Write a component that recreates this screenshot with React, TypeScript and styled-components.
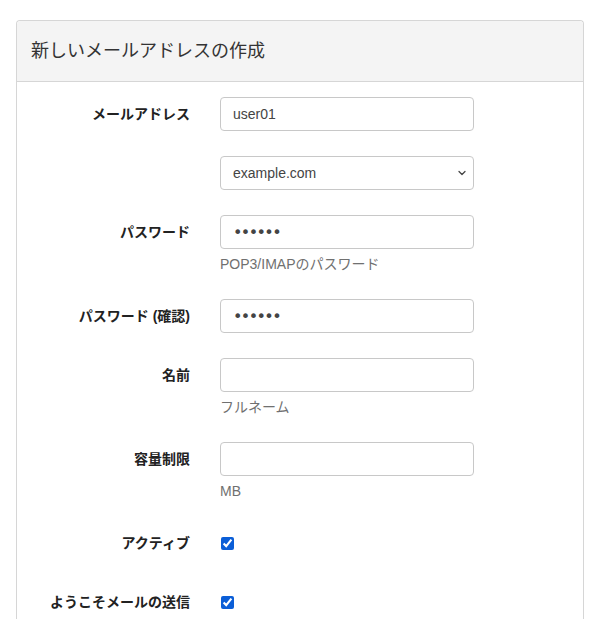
import * as React from 'react'
import styled, { createGlobalStyle } from 'styled-components'
import { ChevronDown } from 'lucide-react'

const GlobalStyle = createGlobalStyle`
  body {
    margin: 0;
    background: #fff;
    font-family: "Liberation Sans", "Noto Sans CJK JP", sans-serif;
    font-size: 14px;
    color: #333;
  }
`

const Page = styled.div`
  padding: 20px 28px 0 16px;
`

const Panel = styled.div`
  border: 1px solid #d6d6d6;
  border-bottom: none;
  border-radius: 4px 4px 0 0;
  background: #fff;
`

const PanelHeading = styled.div`
  background: #f4f4f4;
  border-bottom: 1px solid #d6d6d6;
  border-radius: 4px 4px 0 0;
  padding: 19px 14px 19px;
  font-size: 18px;
  line-height: 22px;
  color: #333;
`

const PanelBody = styled.div`
  padding: 15px 0 0;
  display: flex;
  flex-direction: column;
  gap: 25px;
`

const Row = styled.div`
  display: grid;
  grid-template-columns: 173px 254px;
  column-gap: 30px;
  align-items: start;
`

const Label = styled.label`
  text-align: right;
  font-weight: bold;
  font-size: 14px;
  line-height: 34px;
  height: 34px;
  white-space: nowrap;
  color: #222;
`

const Field = styled.div`
  display: flex;
  flex-direction: column;
  position: relative;
`

const Input = styled.input<{ $secret?: boolean }>`
  box-sizing: border-box;
  width: 254px;
  height: 34px;
  padding: 0 12px;
  border: 1px solid #c8c8c8;
  border-radius: 4px;
  font-family: ${(p) => (p.$secret ? '"DejaVu Sans", sans-serif' : 'inherit')};
  font-size: ${(p) => (p.$secret ? '16px' : '14px')};
  letter-spacing: ${(p) => (p.$secret ? '-1.6px' : 'normal')};
  color: #444;
  outline: none;
  background: #fff;
`

const Select = styled.select`
  box-sizing: border-box;
  width: 254px;
  height: 34px;
  padding: 6px 12px;
  border: 1px solid #c8c8c8;
  border-radius: 4px;
  font-family: inherit;
  font-size: 14px;
  color: #444;
  background: #fff;
  appearance: none;
  outline: none;
`

const Chevron = styled.span`
  position: absolute;
  right: 6px;
  top: 11px;
  display: flex;
  color: #444;
  pointer-events: none;
`

const Help = styled.div`
  margin-top: 5px;
  line-height: 20px;
  font-size: 14px;
  color: #707070;
`

const CheckCell = styled.div`
  height: 34px;
  display: flex;
  align-items: center;
`

const Check = styled.input`
  width: 13px;
  height: 13px;
  margin: 0 0 0 1px;
  accent-color: #0b5ed7;
`

const App: React.FC = () => {
  return (
    <Page>
      <GlobalStyle />
      <Panel>
        <PanelHeading>新しいメールアドレスの作成</PanelHeading>
        <PanelBody>
          <Row>
            <Label>メールアドレス</Label>
            <Field>
              <Input type="text" defaultValue="user01" />
            </Field>
          </Row>
          <Row>
            <Label />
            <Field>
              <Select defaultValue="example.com">
                <option value="example.com">example.com</option>
              </Select>
              <Chevron>
                <ChevronDown size={12} strokeWidth={2.5} />
              </Chevron>
            </Field>
          </Row>
          <Row>
            <Label>パスワード</Label>
            <Field>
              <Input $secret type="password" defaultValue="123456" />
              <Help>POP3/IMAPのパスワード</Help>
            </Field>
          </Row>
          <Row>
            <Label>パスワード (確認)</Label>
            <Field>
              <Input $secret type="password" defaultValue="123456" />
            </Field>
          </Row>
          <Row>
            <Label>名前</Label>
            <Field>
              <Input type="text" />
              <Help>フルネーム</Help>
            </Field>
          </Row>
          <Row>
            <Label>容量制限</Label>
            <Field>
              <Input type="text" />
              <Help>MB</Help>
            </Field>
          </Row>
          <Row>
            <Label>アクティブ</Label>
            <CheckCell>
              <Check type="checkbox" defaultChecked />
            </CheckCell>
          </Row>
          <Row>
            <Label>ようこそメールの送信</Label>
            <CheckCell>
              <Check type="checkbox" defaultChecked />
            </CheckCell>
          </Row>
        </PanelBody>
      </Panel>
    </Page>
  )
}

export default App
